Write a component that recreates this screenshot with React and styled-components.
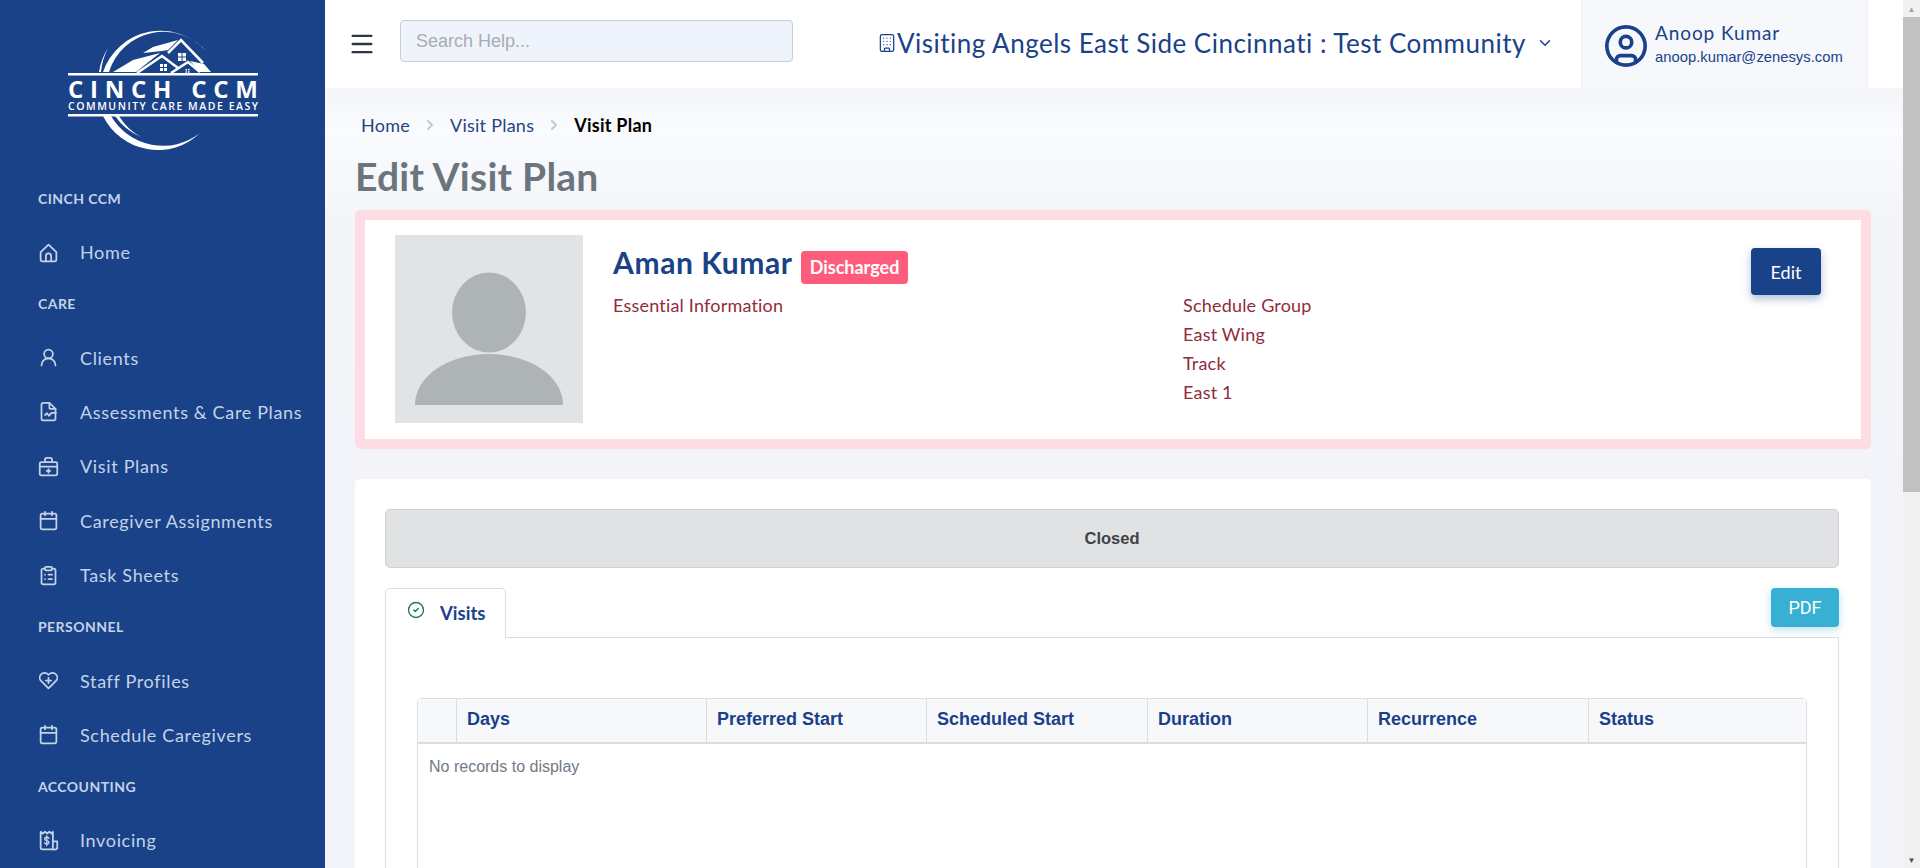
import React from 'react';
import styled, { createGlobalStyle } from 'styled-components';
import { Building, Calendar, ChevronDown, ChevronRight, CircleCheck, CircleUser, ClipboardList, UserRound, Menu } from 'lucide-react';

const navy = '#1a4288';
const body = '"Lato", "Open Sans", sans-serif';

const GlobalStyle = createGlobalStyle`
  html, body {
    margin: 0;
    height: 100%;
    overflow: hidden;
    background: #f3f5f9;
  }
  * {
    box-sizing: border-box;
  }
`;

const Page = styled.div`
  display: flex;
  height: 868px;
  overflow: hidden;
  font-family: ${body};
`;

const Sidebar = styled.aside`
  flex: 0 0 325px;
  background: ${navy};
  color: #c4d3e8;
  padding: 20px 0 0;
`;

const LogoWrap = styled.div`
  height: 167px;
  padding-left: 60px;
`;

const SectionLabel = styled.div`
  height: 28px;
  line-height: 28px;
  padding-left: 38px;
  font-size: 14px;
  font-weight: 700;
  letter-spacing: 0.45px;
  margin: ${({ $first }) => ($first ? '-2px 0 13px' : '10px 0 13px')};
`;

const NavItem = styled.a`
  display: flex;
  align-items: center;
  height: 54.4px;
  padding: 0 0 2px 38px;
  font-size: 18px;
  letter-spacing: 0.66px;
  svg {
    flex: none;
    width: 21px;
    height: 21px;
    margin-right: 21px;
  }
`;

const Main = styled.div`
  flex: 1;
  min-width: 0;
  background: linear-gradient(180deg, #f3f5f9 88px, #fafbfe 130px, #f3f5f9 220px, #f2f4f9 480px);
`;

const TopBar = styled.header`
  display: flex;
  align-items: center;
  height: 88px;
  background: #fff;
  padding-left: 23px;
  color: #2c3646;
`;

const SearchBox = styled.input`
  width: 393px;
  height: 42px;
  margin: -6px 0 0 24px;
  padding: 0 15px;
  border: 1px solid #c9ccd1;
  border-radius: 4px;
  background: #eff3fb;
  font: 18px "Liberation Sans", Arial, sans-serif;
  &::placeholder {
    color: #a9adb4;
  }
`;

const Community = styled.div`
  display: flex;
  align-items: center;
  margin: -2px 0 0 84px;
  color: ${navy};
  font-size: 26px;
  letter-spacing: 0.49px;
  white-space: nowrap;
  svg:last-child {
    margin-left: 10px;
  }
`;

const UserBlock = styled.div`
  display: flex;
  align-items: center;
  width: 287px;
  height: 88px;
  margin-left: auto;
  margin-right: 35px;
  padding-left: 21px;
  background: #f6f8fc;
  border: solid #f0f2f7;
  border-width: 0 1px;
  color: ${navy};
  svg {
    margin-top: 4px;
  }
`;

const UserText = styled.div`
  margin-left: 6px;
`;

const UserName = styled.div`
  font-size: 19px;
  letter-spacing: 0.9px;
  line-height: 26px;
`;

const UserMail = styled.div`
  font: 14.8px/22px "Liberation Sans", Arial, sans-serif;
`;

const Content = styled.div`
  padding: 0 32px 0 30px;
`;

const Breadcrumbs = styled.nav`
  display: flex;
  align-items: center;
  height: 30px;
  margin-top: 22px;
  padding-left: 6px;
  font-size: 18px;
  letter-spacing: 0.25px;
  color: #25437f;
  svg {
    margin: 0 12px;
    color: #c3c7cd;
  }
`;

const Crumb = styled.span`
  font-weight: ${({ $current }) => ($current ? 700 : 400)};
  color: ${({ $current }) => ($current ? '#000' : 'inherit')};
`;

const Title = styled.h1`
  margin: 12px 0 0;
  height: 58px;
  line-height: 48px;
  font-size: 39px;
  font-weight: 700;
  letter-spacing: 0.25px;
  color: #6c757d;
`;

const PinkCard = styled.section`
  display: flex;
  height: 239px;
  padding: 15px 40px 15px 30px;
  background: #fff;
  border: 10px solid #fddde3;
  border-radius: 5px;
`;

const Photo = styled.div`
  flex: 0 0 188px;
  height: 188px;
  background: #e2e3e5;
`;

const Info = styled.div`
  flex: 1;
  min-width: 0;
  margin-left: 30px;
`;

const NameRow = styled.div`
  display: flex;
  align-items: center;
  height: 48px;
  margin-top: 3px;
`;

const Name = styled.h2`
  margin: 0;
  font-size: 30px;
  font-weight: 700;
  letter-spacing: 0.6px;
  color: ${navy};
`;

const Badge = styled.span`
  height: 33px;
  line-height: 33px;
  margin: 11px 0 0 8px;
  padding: 0 9px;
  border-radius: 4px;
  background: #ff5c7c;
  color: #fff;
  font-size: 18px;
  font-weight: 700;
`;

const InfoColumns = styled.div`
  display: grid;
  grid-template-columns: 570px 1fr;
  margin-top: 5px;
`;

const InfoLine = styled.div`
  height: 29px;
  line-height: 29px;
  font-size: 18px;
  letter-spacing: 0.2px;
  color: #8f2c3c;
`;

const EditButton = styled.button`
  flex: none;
  align-self: flex-start;
  width: 70px;
  height: 47px;
  margin-top: 13px;
  border: 0;
  border-radius: 4px;
  background: ${navy};
  color: #fff;
  font: 18px ${body};
  box-shadow: 0 4px 9px rgba(26, 66, 136, 0.35);
`;

const PlanCard = styled.section`
  margin-top: 30px;
  padding: 30px 32px 0 30px;
  height: 600px;
  background: #fff;
  border-radius: 5px;
`;

const StatusBar = styled.div`
  height: 59px;
  text-align: center;
  background: #e1e2e4;
  border: 1px solid #d2d3d5;
  border-radius: 5px;
  font: 700 16.5px/57px "Liberation Sans", Arial, sans-serif;
  color: #3f4347;
`;

const TabRow = styled.div`
  display: flex;
  justify-content: space-between;
  align-items: flex-start;
  height: 50px;
  margin-top: 20px;
  border-bottom: 1px solid #dcdde0;
`;

const Tab = styled.div`
  display: flex;
  align-items: center;
  width: 121px;
  height: 50px;
  padding: 0 0 2px 21px;
  background: #fff;
  border: 1px solid #dcdde0;
  border-bottom: 0;
  border-radius: 5px 5px 0 0;
  color: ${navy};
  font-size: 18.5px;
  font-weight: 700;
  svg {
    margin: -6px 15px 0 0;
    color: #127a62;
  }
`;

const PdfButton = styled.button`
  width: 68px;
  height: 39px;
  border: 0;
  border-radius: 4px;
  background: #38b0d4;
  color: #fff;
  font: 18px "Roboto", Arial, sans-serif;
  box-shadow: 0 3px 8px rgba(56, 176, 212, 0.35);
`;

const TabPanel = styled.div`
  padding: 60px 31px 0;
  height: 500px;
  border: solid #dcdde0;
  border-width: 0 1px 1px;
`;

const Table = styled.div`
  height: 400px;
  border: 1px solid #dcdde0;
  border-radius: 4px 4px 0 0;
  font-family: "Liberation Sans", Arial, sans-serif;
`;

const HeadRow = styled.div`
  display: grid;
  grid-template-columns: 38px 250px 220px 221px 220px 221px 1fr;
  height: 45px;
  background: #f7f8fa;
  border-bottom: 2px solid #dcdde0;
`;

const HeadCell = styled.div`
  line-height: 41px;
  padding-left: 10px;
  font-size: 18px;
  font-weight: 700;
  color: #1b3f8b;
  border-left: ${({ $first }) => ($first ? 0 : '1px solid #dcdde0')};
`;

const Empty = styled.div`
  padding: 13px 11px;
  font-size: 16px;
  line-height: 20px;
  color: #6f7a86;
`;

const Scrollbar = styled.div`
  flex: 0 0 17px;
  display: flex;
  flex-direction: column;
  background: #f1f1f1;
`;

const ScrollArrow = styled.div`
  flex: 0 0 17px;
  display: flex;
  align-items: center;
  justify-content: center;
  font-size: 8px;
  line-height: 1;
  color: ${({ $dim }) => ($dim ? '#a3a3a3' : '#505050')};
`;

const ScrollTrack = styled.div`
  flex: 1;
`;

const ScrollThumb = styled.div`
  height: 475px;
  background: #c1c1c1;
`;

const Logo = () => (
  <svg width="210" height="135" viewBox="60 20 210 135" fill="#fff">
    <path d="M103 72 A61 61 0 0 1 207 52 A57 57 0 0 0 109 72 Z" />
    <path d="M103 116 A61 61 0 0 0 200 133 A60 60 0 0 1 111 116 Z" />
    <path d="M99 72 A62 62 0 0 1 108 48 A66 66 0 0 0 101 72 Z" />
    <path d="M115 116 A60 60 0 0 0 141 137 A58 58 0 0 1 119 116 Z" />
    <path d="M113 72 L133 60 L160 53 L136 72 Z" />
    <path d="M143 53 L153 47 L178 40 L168 50 L162 51 Z" />
    <path d="M190 61 L204 64 L211 72 L200 72 Z" />
    <path d="M137 73 L162 56 L178 68" fill="none" stroke="#fff" strokeWidth="2.6" />
    <path d="M168 53 L181 40 L203 63" fill="none" stroke="#fff" strokeWidth="2.6" />
    <path d="M171 73 L188 62 L200 72" fill="none" stroke="#fff" strokeWidth="2.6" />
    <path d="M178 53h3.5v3.5h-3.5zM182.500 53h3.500v3.500h-3.500zM178 57.500h3.500v3.500h-3.500zM182.500 57.500h3.500v3.500h-3.500z" />
    <path d="M160 64h3v3h-3zM164 64h3v3h-3zM160 68h3v3h-3zM164 68h3v3h-3z" />
    <path d="M185.500 69h1.600v1.600h-1.600zM188 69h1.600v1.600h-1.600zM185.500 71.200h1.600v1.600h-1.600zM188 71.200h1.600v1.600h-1.600z" />
    <rect x="68" y="73" width="190" height="2.500" />
    <rect x="68" y="114" width="190" height="2.500" />
    <text x="68" y="98" fontFamily="Open Sans, sans-serif" fontWeight="700" fontSize="24" textLength="190">CINCH CCM</text>
    <text x="68" y="109.500" fontFamily="Open Sans, sans-serif" fontWeight="600" fontSize="10.500" textLength="190">COMMUNITY CARE MADE EASY</text>
  </svg>
);

const Glyph = ({ children }) => (
  <svg viewBox="0 0 24 24" fill="none" stroke="currentColor" strokeWidth="2" strokeLinecap="round" strokeLinejoin="round">
    {children}
  </svg>
);

const HomeIcon = () => (
  <Glyph>
    <path d="M3 11.500 12 3l9 8.500V20a2 2 0 0 1-2 2H5a2 2 0 0 1-2-2z" />
    <path d="M9 22v-6a3 3 0 0 1 6 0v6" />
  </Glyph>
);

const ChartFileIcon = () => (
  <Glyph>
    <path d="M20 9v11a2 2 0 0 1-2 2H6a2 2 0 0 1-2-2V4a2 2 0 0 1 2-2h7z" />
    <path d="M13 2v5a2 2 0 0 0 2 2h5" />
    <path d="M8 16l2.500-2 2 3 3-3.500h5" />
  </Glyph>
);

const MedKitIcon = () => (
  <Glyph>
    <rect x="2" y="7" width="20" height="15" rx="2" />
    <path d="M8 7V4a2 2 0 0 1 2-2h4a2 2 0 0 1 2 2v3" />
    <path d="M2 12h20" />
    <path d="M12 15v4M10 17h4" />
  </Glyph>
);

const HeartPlusIcon = () => (
  <Glyph>
    <path d="M12 21 3.500 12.500a5.400 5.400 0 0 1 0-7.500C6 2.500 10 3 12 5.500 14 3 18 2.500 20.500 5a5.400 5.400 0 0 1 0 7.500z" />
    <path d="M12 9v6M9 12h6" />
  </Glyph>
);

const InvoiceIcon = () => (
  <Glyph>
    <path d="M17 22H5a2 2 0 0 1-2-2V2l2.500 2L8 2l2.500 2L13 2l2.500 2L17 2v20a3 3 0 0 0 3 0 2 2 0 0 0 2-2v-7h-5" />
    <path d="M12.500 9.500C12 8.700 11 8.300 10 8.300c-1.300 0-2.300.7-2.300 1.900 0 2.600 4.800 1.300 4.800 3.900 0 1.200-1.100 1.900-2.500 1.900-1.100 0-2.100-.5-2.600-1.300M10 6.800v11" strokeWidth="1.600" />
  </Glyph>
);

const care = [
  ['Clients', <UserRound />],
  ['Assessments & Care Plans', <ChartFileIcon />],
  ['Visit Plans', <MedKitIcon />],
  ['Caregiver Assignments', <Calendar />],
  ['Task Sheets', <ClipboardList />],
];

const personnel = [
  ['Staff Profiles', <HeartPlusIcon />],
  ['Schedule Caregivers', <Calendar />],
];

const columns = ['Days', 'Preferred Start', 'Scheduled Start', 'Duration', 'Recurrence', 'Status'];

const renderNav = (items) =>
  items.map(([label, icon]) => (
    <NavItem key={label}>
      {icon}
      {label}
    </NavItem>
  ));

const App = () => (
  <Page>
    <GlobalStyle />
    <Sidebar>
      <LogoWrap>
        <Logo />
      </LogoWrap>
      <SectionLabel $first>CINCH CCM</SectionLabel>
      {renderNav([['Home', <HomeIcon />]])}
      <SectionLabel>CARE</SectionLabel>
      {renderNav(care)}
      <SectionLabel>PERSONNEL</SectionLabel>
      {renderNav(personnel)}
      <SectionLabel>ACCOUNTING</SectionLabel>
      {renderNav([['Invoicing', <InvoiceIcon />]])}
    </Sidebar>

    <Main>
      <TopBar>
        <Menu size={28} strokeWidth={2} />
        <SearchBox placeholder="Search Help..." />
        <Community>
          <Building size={20} strokeWidth={1.5} />
          Visiting Angels East Side Cincinnati : Test Community
          <ChevronDown size={18} />
        </Community>
        <UserBlock>
          <CircleUser size={46} strokeWidth={1.9} />
          <UserText>
            <UserName>Anoop Kumar</UserName>
            <UserMail>anoop.kumar@zenesys.com</UserMail>
          </UserText>
        </UserBlock>
      </TopBar>

      <Content>
        <Breadcrumbs>
          <Crumb>Home</Crumb>
          <ChevronRight size={16} strokeWidth={3} />
          <Crumb>Visit Plans</Crumb>
          <ChevronRight size={16} strokeWidth={3} />
          <Crumb $current>Visit Plan</Crumb>
        </Breadcrumbs>
        <Title>Edit Visit Plan</Title>

        <PinkCard>
          <Photo>
            <svg width="188" height="188" viewBox="0 0 188 188" fill="#aeb3b6">
              <ellipse cx="94" cy="77.500" rx="37" ry="40" />
              <path d="M20 170 C20 140 55 119 94 119 C133 119 168 140 168 170 Z" />
            </svg>
          </Photo>
          <Info>
            <NameRow>
              <Name>Aman Kumar</Name>
              <Badge>Discharged</Badge>
            </NameRow>
            <InfoColumns>
              <InfoLine>Essential Information</InfoLine>
              <div>
                <InfoLine>Schedule Group</InfoLine>
                <InfoLine>East Wing</InfoLine>
                <InfoLine>Track</InfoLine>
                <InfoLine>East 1</InfoLine>
              </div>
            </InfoColumns>
          </Info>
          <EditButton>Edit</EditButton>
        </PinkCard>

        <PlanCard>
          <StatusBar>Closed</StatusBar>
          <TabRow>
            <Tab>
              <CircleCheck size={18} strokeWidth={1.8} />
              Visits
            </Tab>
            <PdfButton>PDF</PdfButton>
          </TabRow>
          <TabPanel>
            <Table>
              <HeadRow>
                <HeadCell $first />
                {columns.map((c) => (
                  <HeadCell key={c}>{c}</HeadCell>
                ))}
              </HeadRow>
              <Empty>No records to display</Empty>
            </Table>
          </TabPanel>
        </PlanCard>
      </Content>
    </Main>

    <Scrollbar>
      <ScrollArrow $dim>▲</ScrollArrow>
      <ScrollThumb />
      <ScrollTrack />
      <ScrollArrow>▼</ScrollArrow>
    </Scrollbar>
  </Page>
);

export default App;
